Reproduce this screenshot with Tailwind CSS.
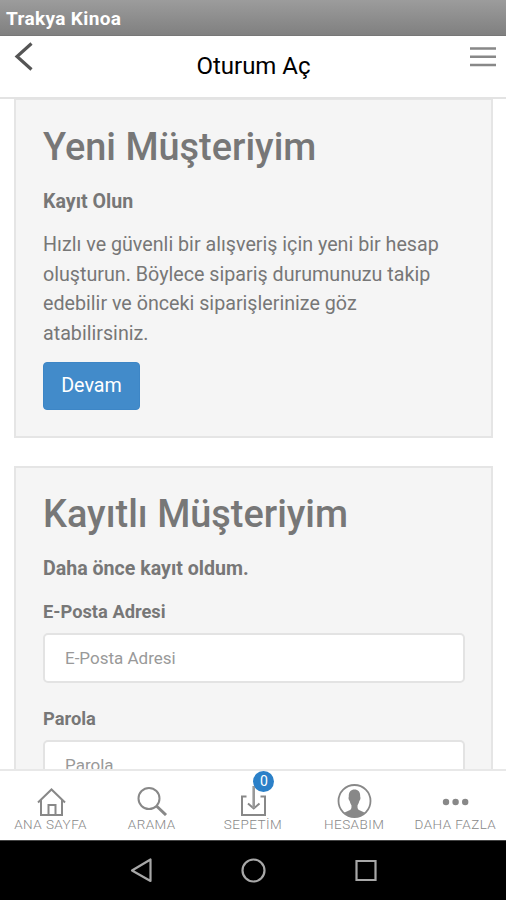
<!DOCTYPE html>
<html lang="tr">
<head>
<meta charset="utf-8">
<title>Trakya Kinoa</title>
<script src="https://cdn.jsdelivr.net/npm/@tailwindcss/browser@4"></script>
</head>
<body class="w-[506px] h-[900px] overflow-hidden bg-white font-[Roboto,sans-serif] text-[#777] flex flex-col">
<div class="h-[36px] shrink-0 bg-linear-to-b from-[#9c9c9c] to-[#808080] border-b border-[#777] px-[6px] text-white font-bold text-[19px] tracking-[0.350px] leading-[37px] whitespace-nowrap"><span>Trakya Kinoa</span></div>
<header class="h-[63px] shrink-0 border-b-2 border-[#e3e3e3] bg-white flex justify-between pl-[14px] pr-[10px]">
  <svg class="w-[20px] h-[30px] mt-[6px]" viewBox="0 0 20 30" fill="none" stroke="#555" stroke-width="3.200"><path d="M17.500 1.500L3 14.500L17.500 27.500"/></svg>
  <h1 class="text-black text-[24px] leading-[60px] ml-[3px] whitespace-nowrap"><span>Oturum Aç</span></h1>
  <svg class="w-[26px] h-[24px] mt-[9px]" viewBox="0 0 26 24" stroke="#888" stroke-width="2.400"><path d="M0 3.500H26M0 11.700H26M0 20H26"/></svg>
</header>
<main class="flex-1 min-h-0 overflow-hidden px-[14px]">
  <section class="h-[339px] w-[479px] bg-[#f5f5f5] border-2 border-t border-[#e5e5e5] px-[27px] pt-[24px]">
    <h2 class="text-[37.900px] leading-[46px] font-medium whitespace-nowrap"><span>Yeni Müşteriyim</span></h2>
    <p class="mt-[17px] text-[19.600px] leading-[30px] font-bold whitespace-nowrap"><span>Kayıt Olun</span></p>
    <p class="mt-[13px] text-[19.700px] leading-[29.500px] whitespace-nowrap"><span>Hızlı ve güvenli bir alışveriş için yeni bir hesap</span><br><span>oluşturun. Böylece sipariş durumunuzu takip</span><br><span>edebilir ve önceki siparişlerinize göz</span><br><span>atabilirsiniz.</span></p>
    <button class="mt-[14px] block w-[97px] h-[48px] rounded-[4px] bg-[#428bca] border border-[#3d86c6] text-white text-[19.700px] leading-[46px]"><span>Devam</span></button>
  </section>
  <section class="mt-[28px] h-[400px] w-[479px] bg-[#f5f5f5] border-2 border-[#e5e5e5] px-[27px] pt-[23px]">
    <h2 class="text-[37.900px] leading-[46px] font-medium whitespace-nowrap"><span>Kayıtlı Müşteriyim</span></h2>
    <p class="mt-[17px] text-[19.600px] leading-[30px] font-bold whitespace-nowrap"><span>Daha önce kayıt oldum.</span></p>
    <label class="mt-[13px] block text-[18.300px] leading-[30px] font-bold"><span>E-Posta Adresi</span></label>
    <div class="mt-[6px] w-[422px] h-[50px] bg-white border-2 border-[#e3e3e3] rounded-[5px] pl-[20px] text-[17px] leading-[47px] text-[#999]"><span>E-Posta Adresi</span></div>
    <label class="mt-[21px] block text-[18.300px] leading-[30px] font-bold"><span>Parola</span></label>
    <div class="mt-[6px] w-[422px] h-[50px] bg-white border-2 border-[#e3e3e3] rounded-[5px] pl-[20px] text-[17px] leading-[47px] text-[#999]"><span>Parola</span></div>
  </section>
</main>
<nav class="h-[71px] shrink-0 bg-white border-t-2 border-[#e8e8e8] grid grid-cols-5 text-center text-[13.500px] tracking-[0.450px] leading-[16px] text-[#888] font-light whitespace-nowrap">
  <div class="flex flex-col items-center">
    <svg class="w-[40px] h-[36px] mt-[9px]" viewBox="0 0 40 36" fill="none" stroke="#888" stroke-width="2"><path d="M7 22.500L20.500 9.500L34 22.500M10 20V35H31V20M17.500 35V25H24.500V35"/></svg>
    <span>ANA SAYFA</span>
  </div>
  <div class="flex flex-col items-center">
    <svg class="w-[40px] h-[36px] mt-[9px]" viewBox="0 0 40 36" fill="none" stroke="#888" stroke-width="2"><circle cx="17" cy="18.500" r="10.500"/><path d="M24.500 26L34 35" stroke-width="3"/></svg>
    <span>ARAMA</span>
  </div>
  <div class="flex flex-col items-center relative">
    <svg class="w-[40px] h-[36px] mt-[9px]" viewBox="0 0 40 36" fill="none" stroke="#888" stroke-width="2"><path d="M13.500 16.500H9V35H32V16.500H27.500M15 23.500L20.700 28.500L26.500 23.500"/><path d="M20.700 6V28" stroke="#999" stroke-width="2.600"/></svg>
    <span>SEPETİM</span>
    <div class="absolute left-[51px] top-[0px] w-[21px] h-[21px] rounded-full bg-[#2b80c8] text-white text-[14px] tracking-normal leading-[21px] font-normal">0</div>
  </div>
  <div class="flex flex-col items-center">
    <svg class="w-[40px] h-[36px] mt-[9px] overflow-visible" viewBox="0 0 40 36" fill="none" stroke="#888" stroke-width="1.800"><circle cx="20.500" cy="21" r="16"/><path transform="translate(.5 .5)" fill="#888" stroke="none" d="M14.300 16C14 11.500 16.500 9 20 9S26 11.500 25.700 16C26.500 18 25.500 19.500 24.800 20.500C24.400 23 23.300 24 23 25C22.800 28 23.500 29 25 29.800L30.500 32.300C27.500 35 24 36.500 20 36.500S12.500 35 9.500 32.300L15 29.800C16.500 29 17.200 28 17 25C16.700 24 15.600 23 15.200 20.500C14.500 19.500 13.500 18 14.300 16Z"/></svg>
    <span>HESABIM</span>
  </div>
  <div class="flex flex-col items-center">
    <svg class="w-[40px] h-[36px] mt-[9px]" viewBox="0 0 40 36" fill="#888"><circle cx="11" cy="22" r="3.200"/><circle cx="20.600" cy="22" r="3.200"/><circle cx="30.200" cy="22" r="3.200"/></svg>
    <span>DAHA FAZLA</span>
  </div>
</nav>
<footer class="h-[60px] shrink-0 bg-black border-t border-[#444]">
  <svg class="w-[506px] h-[59px]" viewBox="0 0 506 59" fill="none" stroke="#a8a8a8" stroke-width="2.200" stroke-linejoin="round"><path d="M150.500 18.500V40L132 29.500Z"/><circle cx="253.500" cy="29.500" r="11"/><path stroke-linejoin="miter" d="M356.500 20H375.500V39H356.500Z"/></svg>
</footer>
</body>
</html>
